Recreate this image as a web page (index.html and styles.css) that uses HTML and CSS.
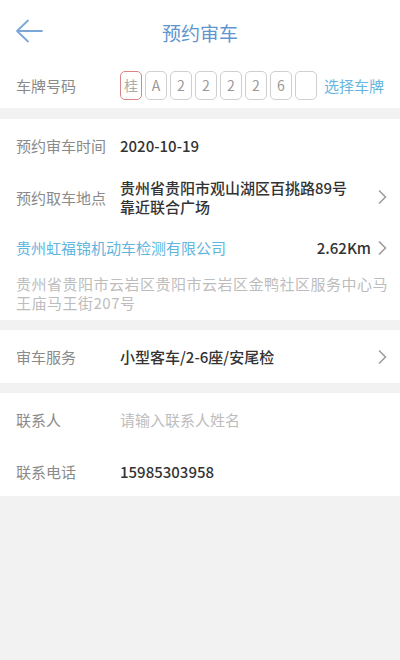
FILE: index.html
```html
<!DOCTYPE html>
<html lang="zh">
<head>
<meta charset="utf-8">
<link rel="stylesheet" href="styles.css">
</head>
<body>
<div class="page">
  <header class="header">
    <svg class="back" width="28" height="24" viewBox="0 0 28 24"><path d="M13 1.5 L2 12 L13 22.5 M2 12 H27" fill="none" stroke="#7aa6d8" stroke-width="1.8" stroke-linecap="round" stroke-linejoin="round"/></svg>
    <h1 class="title">预约审车</h1>
    <span></span>
  </header>

  <section class="card plate-card">
    <div class="row plate-row">
      <span class="label">车牌号码</span>
      <div class="plates">
        <span class="box active">桂</span>
        <span class="box">A</span>
        <span class="box">2</span>
        <span class="box">2</span>
        <span class="box">2</span>
        <span class="box">2</span>
        <span class="box">6</span>
        <span class="box"></span>
      </div>
      <span class="link">选择车牌</span>
    </div>
  </section>

  <section class="card">
    <div class="row r-time">
      <span class="label">预约审车时间</span>
      <span class="value">2020-10-19</span>
    </div>
    <div class="row r-loc">
      <span class="label">预约取车地点</span>
      <span class="value multi">贵州省贵阳市观山湖区百挑路89号<br>靠近联合广场</span>
      <svg class="chev" width="10" height="16" viewBox="0 0 10 16"><path d="M2 1.5 L8.5 8 L2 14.5" fill="none" stroke="#9a9a9a" stroke-width="1.5"/></svg>
    </div>
    <div class="row r-company">
      <span class="company">贵州虹福锦机动车检测有限公司</span>
      <span class="dist">2.62Km</span>
      <svg class="chev" width="10" height="16" viewBox="0 0 10 16"><path d="M2 1.5 L8.5 8 L2 14.5" fill="none" stroke="#9a9a9a" stroke-width="1.5"/></svg>
    </div>
    <p class="addr">贵州省贵阳市云岩区贵阳市云岩区金鸭社区服务中心马王庙马王街207号</p>
  </section>

  <section class="card">
    <div class="row r-std">
      <span class="label">审车服务</span>
      <span class="value">小型客车/2-6座/安尾检</span>
      <svg class="chev" width="10" height="16" viewBox="0 0 10 16"><path d="M2 1.5 L8.5 8 L2 14.5" fill="none" stroke="#9a9a9a" stroke-width="1.5"/></svg>
    </div>
  </section>

  <section class="card">
    <div class="row r-std">
      <span class="label">联系人</span>
      <span class="placeholder">请输入联系人姓名</span>
    </div>
    <div class="row r-std">
      <span class="label">联系电话</span>
      <span class="value">15985303958</span>
    </div>
  </section>
</div>
</body>
</html>
```

FILE: styles.css
```css
* { box-sizing: border-box; }
html, body { margin: 0; padding: 0; }
body {
  background: #f2f2f2;
  font-family: "Noto Sans CJK SC", "Noto Sans", sans-serif;
  font-size: 15px;
  color: #333;
  width: 400px;
  height: 660px;
  overflow: hidden;
}
.header {
  height: 62px;
  background: #fff;
  display: grid;
  grid-template-columns: 60px 1fr 60px;
  align-items: center;
}
.back { margin-left: 15px; }
.title {
  margin: 0;
  text-align: center;
  font-size: 19px;
  font-weight: 400;
  color: #5f96d0;
  line-height: 1;
  padding-top: 2px;
}
.card {
  background: #fff;
  margin-bottom: 10px;
}
.plate-card { height: 46px; margin-bottom: 11px; }
.row {
  display: flex;
  align-items: center;
  padding: 0 16px;
}
.label {
  width: 104px;
  flex: none;
  color: #8a8a8a;
  white-space: nowrap;
}
.plate-row { height: 46px; }
.plates {
  display: flex;
  gap: 3px;
}
.box {
  width: 22px;
  height: 29px;
  border: 1.5px solid #cfcfcf;
  border-radius: 5px;
  display: flex;
  align-items: center;
  justify-content: center;
  font-size: 14px;
  color: #999;
}
.box.active { border-color: #d98585; color: #aaa; }
.link {
  margin-left: 7px;
  color: #66b6e0;
  white-space: nowrap;
}
.value {
  color: #333;
  font-weight: 500;
  flex: 1;
}
.value.multi { line-height: 19px; }
.placeholder { color: #bdbdbd; flex: 1; }
.chev { flex: none; margin-left: 4px; margin-right: -3px; }
.r-time { height: 52px; }
.r-loc { height: 52px; }
.r-company { height: 49px; }
.company { color: #5fb5e0; flex: 1; }
.dist { color: #333; font-weight: 500; margin-right: 2px; }
.addr {
  margin: 0;
  padding: 2px 10px 8px 16px;
  color: #bdbdbd;
  line-height: 19px;
  letter-spacing: 0.5px;
}
.r-std { height: 53px; }
.card .r-std + .r-std { height: 50px; }
```
